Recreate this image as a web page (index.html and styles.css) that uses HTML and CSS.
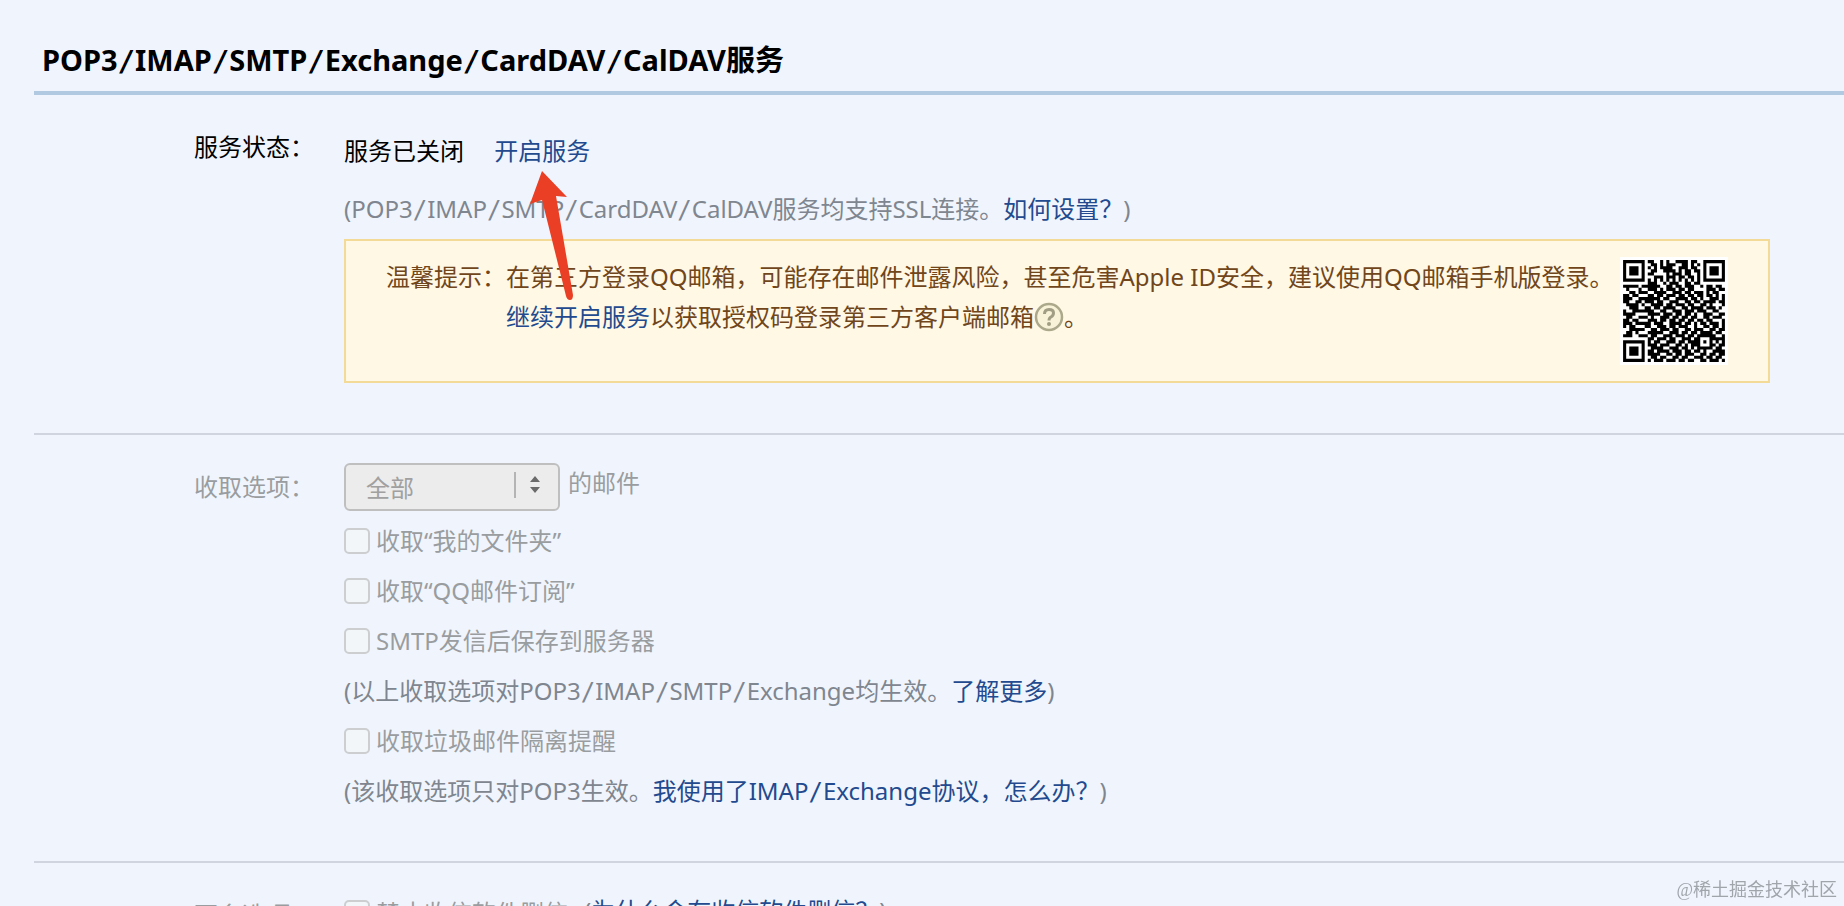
FILE: index.html
```
<!DOCTYPE html>
<html lang="zh-CN">
<head>
    <meta charset="UTF-8">
    <meta name="viewport" content="width=device-width, initial-scale=1.0">
    <title>QQ邮箱 - 帐户设置</title>
    <link rel="stylesheet" href="styles.css">
</head>
<body>
    <main class="settings">
        <h1>POP3<i>/</i>IMAP<i>/</i>SMTP<i>/</i>Exchange<i>/</i>CardDAV<i>/</i>CalDAV服务</h1>

        <section class="row status">
            <div class="label">服务状态：</div>
            <div class="content">
                <div class="state">
                    服务已关闭
                    <a class="open-link" href="#">开启服务<svg class="arrow" width="44" height="130" viewBox="0 0 44 130"><path d="M12 0 L37 26 L26 25 L43 124 Q43 129 40 129 Q37 129 36 125 L12 29 L0 33 Z" fill="#ea3f25"/></svg></a>
                </div>
                <p class="note">(POP3<i>/</i>IMAP<i>/</i>SMTP<i>/</i>CardDAV<i>/</i>CalDAV服务均支持SSL连接。<a href="#">如何设置？</a>)</p>
                <div class="tip">
                    <div class="tip-label">温馨提示：</div>
                    <div class="tip-text">
                        在第三方登录QQ邮箱，可能存在邮件泄露风险，甚至危害Apple ID安全，建议使用QQ邮箱手机版登录。<br>
                        <a href="#">继续开启服务</a>以获取授权码登录第三方客户端邮箱<svg class="help" width="30" height="30" viewBox="0 0 30 30"><circle cx="15" cy="15" r="13" fill="#f8f3d8" stroke="#aba88c" stroke-width="2.5"/><path d="M10.5 12 Q10.500 7.500 15 7.500 Q19.500 7.500 19.500 11 Q19.500 13.500 17 15 Q15 16 15 18.500" fill="none" stroke="#a09d84" stroke-width="3"/><circle cx="15" cy="22" r="2" fill="#a09d84"/></svg>。
                    </div>
                    <svg class="qr" viewBox="-1 -1 35 35"><path id="qr-modules"/></svg>
                </div>
            </div>
        </section>

        <section class="row options">
            <div class="label">收取选项：</div>
            <div class="content">
                <div class="range">
                    <span class="select-box">
                        <select id="range" disabled><option>全部</option></select>
                        <svg class="select-arrows" width="30" height="28" viewBox="0 0 30 28"><path d="M1 1 V27" stroke="#b4b4b4" stroke-width="2"/><path d="M16 11 L21 5 L26 11 Z M16 16 L21 22 L26 16 Z" fill="#6a6a6a"/></svg>
                    </span>
                    <label for="range">的邮件</label>
                </div>
                <label class="check"><input type="checkbox" disabled>收取“我的文件夹”</label>
                <label class="check"><input type="checkbox" disabled>收取“QQ邮件订阅”</label>
                <label class="check"><input type="checkbox" disabled>SMTP发信后保存到服务器</label>
                <p class="note">(以上收取选项对POP3<i>/</i>IMAP<i>/</i>SMTP<i>/</i>Exchange均生效。<a href="#">了解更多</a>)</p>
                <label class="check"><input type="checkbox" disabled>收取垃圾邮件隔离提醒</label>
                <p class="note">(该收取选项只对POP3生效。<a href="#">我使用了IMAP<i>/</i>Exchange协议，怎么办？</a>)</p>
            </div>
        </section>

        <section class="row more">
            <div class="label">更多选项：</div>
            <div class="content">
                <label class="check"><input type="checkbox" disabled>禁止收信软件删信</label>
                <span class="note">(<a href="#">为什么会有收信软件删信？</a>)</span>
            </div>
        </section>
    </main>
    <div class="watermark">@稀土掘金技术社区</div>

    <script>
        const rows = [
            '111111101100101001111011001111111',
            '100000100110101110011010101000001',
            '101110101010111100111011001011101',
            '101110100110011110101101101011101',
            '101110101100001011101100101011101',
            '100000100011101110110110101000001',
            '111111101010101010101010101111111',
            '000000001110010111001101100000000',
            '111110111111001101101110010110110',
            '010001001110101110110110000111011',
            '001101110011110011101101110101100',
            '110110001101101110110110110110101',
            '111001111111011001111011010011101',
            '110011011101100111001101101111011',
            '011110100111101101110110011010001',
            '001110011011011110011011110111010',
            '100111111100110011101110111001100',
            '111100001111011101101101001110011',
            '011001110100111011011011001101110',
            '110110001110110110110110110110001',
            '111011111011100111101101011011101',
            '101100011001110110111001001101101',
            '001111100110111011001101110011011',
            '011010001111100111011011011110110',
            '111001110110011101110110111111001',
            '000000001101110110011101100011111',
            '111111101011001110110111101010101',
            '100000101110111001101011100011011',
            '101110100111100111011010111110110',
            '101110101101111011101101101001111',
            '101110101111001101101110011011011',
            '100000100110110011011001110110110',
            '111111101011101110110110011011101'
        ];

        let path = '';
        rows.forEach((row, y) => {
            for (const run of row.matchAll(/1+/g)) {
                path += `M${run.index} ${y}h${run[0].length}v1h-${run[0].length}z`;
            }
        });
        document.getElementById('qr-modules').setAttribute('d', path);
    </script>
</body>
</html>
```

FILE: styles.css
```
body {
    margin: 0;
    height: 100vh;
    overflow: hidden;
    background-color: #f0f5fd;
    color: #000;
    font-family: "Noto Sans", "Noto Sans CJK SC", sans-serif;
    font-size: 24px;
    line-height: 40px;
}
a {
    color: #234a8e;
    text-decoration: none;
}
/* wide slash between protocol names */
i {
    font-family: "DejaVu Sans Mono", monospace;
    font-style: normal;
    line-height: 1;
}
h1 {
    margin: 0;
    padding: 40px 8px 11px;
    border-bottom: 4px solid #b1cae2;
    font-size: 29px;
    line-height: 40px;
}
.settings {
    margin-left: 34px;
}
.row {
    display: flex;
    border-bottom: 2px solid #cfd4df;
}
.label {
    width: 310px;
    padding-left: 160px;
    box-sizing: border-box;
    flex-shrink: 0;
}
.content {
    flex: 1;
}
.status {
    padding: 32px 0 50px;
}
.state {
    padding-top: 4px;
}
.open-link {
    position: relative;
    margin-left: 24px;
}
.arrow {
    position: absolute;
    top: 37px;
    left: 36px;
}
.note {
    margin: 0;
    color: #7f868f;
}
.state + .note {
    margin: 18px 0 10px;
}
.tip {
    display: flex;
    margin-right: 74px;
    padding: 16px 40px;
    border: 2px solid #f3da97;
    background-color: #fff8e5;
    color: #70461a;
}
.tip-text {
    flex: 1;
    white-space: nowrap;
}
.help {
    vertical-align: -6px;
}
.qr {
    width: 108px;
    height: 108px;
    background: white;
}
.options {
    padding: 28px 0 50px;
    color: #9a9d9f;
}
.options .label, .more .label {
    padding-top: 4px;
}
.options .content {
    display: flex;
    flex-direction: column;
    gap: 10px;
}
.range {
    display: flex;
    gap: 8px;
}
.select-box {
    position: relative;
}
select {
    appearance: none;
    display: block;
    width: 216px;
    height: 48px;
    padding: 2px 20px 0;
    border: 2px solid #bfbfbf;
    border-radius: 6px;
    background-color: #ececec;
    color: #a0a0a0;
    font: inherit;
    opacity: 1;
}
.select-arrows {
    position: absolute;
    top: 8px;
    right: 16px;
}
.check {
    display: flex;
    align-items: center;
    gap: 6px;
}
input[type="checkbox"] {
    appearance: none;
    width: 26px;
    height: 26px;
    margin: 0;
    border: 2px solid #ccced0;
    border-radius: 5px;
    background-color: #f3f6f9;
}
.more {
    padding-top: 28px;
    color: #9a9d9f;
}
.more .content {
    display: flex;
    gap: 16px;
}
.watermark {
    position: fixed;
    right: 7px;
    bottom: 0;
    color: #a0a4ab;
    font-family: "Liberation Serif", "Noto Sans CJK SC", serif;
    font-size: 18px;
    line-height: 32px;
}
```
